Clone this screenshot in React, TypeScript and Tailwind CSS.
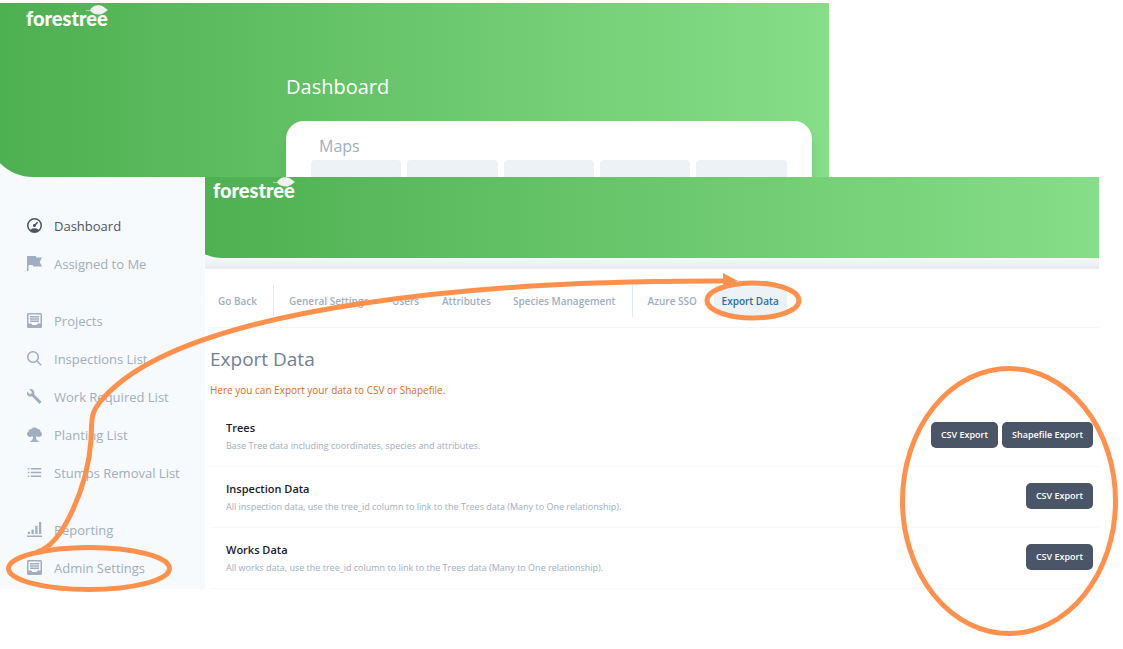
import React from "react";

const ICONS = {
  dashboard:
    "M10 20a10 10 0 1 1 0-20 10 10 0 0 1 0 20zm-5.6-4.29a9.95 9.95 0 0 1 11.2 0 8 8 0 1 0-11.2 0zm6.12-7.64l3.02-3.02 1.41 1.41-3.02 3.02a2 2 0 1 1-1.41-1.41z",
  flag: "M7.667 12H2v8H0V0h12l.333 2H20l-3 6 3 6H8l-.333-2z",
  inbox:
    "M14 14h4V2H2v12h4c0 1.1.9 2 2 2h4a2 2 0 0 0 2-2zM0 2C0 .9.9 0 2 0h16a2 2 0 0 1 2 2v16a2 2 0 0 1-2 2H2a2 2 0 0 1-2-2V2zm4 2h12v2H4V4zm0 3h12v2H4V7zm0 3h12v2H4v-2z",
  search:
    "M12.9 14.32a8 8 0 1 1 1.41-1.41l5.35 5.33-1.42 1.42-5.33-5.34zM8 14A6 6 0 1 0 8 2a6 6 0 0 0 0 12z",
  wrench:
    "M6.47 9.8A5 5 0 0 1 .2 3.22l3.95 3.95 2.82-2.83L3.03.41a5 5 0 0 1 6.4 6.68l10 10-2.83 2.83L6.47 9.8z",
  tree: "M10 .5c2 0 3.600.9 4.300 2.300 2-.1 3.700 1.400 3.600 3.300C19.200 6.800 20 8 20 9.300c0 2.200-1.800 3.900-4.100 3.900-1 0-1.900-.3-2.600-.8-.4.300-.8.500-1.300.6.100 2 .4 3.600 1.200 4.800l2.300.9V20h-11v-1.300l2.300-.9c.8-1.200 1.100-2.800 1.200-4.800-.5-.1-.9-.3-1.300-.6-.7.500-1.600.8-2.600.8C1.800 13.200 0 11.500 0 9.300 0 8 .8 6.800 2.100 6.100 2 4.200 3.700 2.700 5.700 2.800 6.400 1.400 8 .5 10 .5z",
  list: "M1 4h2v2H1V4zm4 0h14v2H5V4zM1 9h2v2H1V9zm4 0h14v2H5V9zm-4 5h2v2H1v-2zm4 0h14v2H5v-2z",
  bars: "M0 18h20v2H0zM1 13h3v3H1zM6 10h3v6H6zM11 5h3v11h-3zM16 0h3v16h-3z",
};

type IconName = keyof typeof ICONS;

const MENU: { label: string; icon: IconName }[][] = [
  [
    { label: "Dashboard", icon: "dashboard" },
    { label: "Assigned to Me", icon: "flag" },
  ],
  [
    { label: "Projects", icon: "inbox" },
    { label: "Inspections List", icon: "search" },
    { label: "Work Required List", icon: "wrench" },
    { label: "Planting List", icon: "tree" },
    { label: "Stumps Removal List", icon: "list" },
  ],
  [
    { label: "Reporting", icon: "bars" },
    { label: "Admin Settings", icon: "inbox" },
  ],
];

const EXPORTS = [
  {
    title: "Trees",
    text: "Base Tree data including coordinates, species and attributes.",
    actions: ["CSV Export", "Shapefile Export"],
  },
  {
    title: "Inspection Data",
    text: "All inspection data, use the tree_id column to link to the Trees data (Many to One relationship).",
    actions: ["CSV Export"],
  },
  {
    title: "Works Data",
    text: "All works data, use the tree_id column to link to the Trees data (Many to One relationship).",
    actions: ["CSV Export"],
  },
];

function Logo() {
  return (
    <a href="#home" className="relative inline-block font-['Lato'] text-[20px] leading-6 font-black text-white">
      forestree
      <svg viewBox="0 0 22 10" className="absolute -top-px right-0 h-[10px] w-[22px]" aria-hidden="true">
        <path d="M0 5h4C6 2 9 0 13 .3c4 .2 6 2.700 9 4.700-3 2-5 4.500-9 4.500C9 9.500 6 8 4 5.500H0z" fill="#f1f1f1" />
      </svg>
    </a>
  );
}

function Sidebar() {
  return (
    <aside className="w-[205px] shrink-0 bg-[#f7fafc] pt-[30px] pl-[27px]">
      <nav className="flex flex-col gap-[19px]" aria-label="Main">
        {MENU.map((group, i) => (
          <ul key={i} className="flex flex-col">
            {group.map((item) => (
              <li key={item.label}>
                <a
                  href="#menu"
                  className={`flex h-[38px] items-center gap-3 text-[13px] ${
                    item.label === "Dashboard" ? "text-[#4a5568]" : "text-[#a0aec0]"
                  }`}
                >
                  <svg viewBox="0 0 20 20" className="mb-0.5 size-[15px] fill-current" aria-hidden="true">
                    <path d={ICONS[item.icon]} />
                  </svg>
                  <span className="pt-0.5">{item.label}</span>
                </a>
              </li>
            ))}
          </ul>
        ))}
      </nav>
    </aside>
  );
}

function SettingsTabs() {
  const tab = "flex h-8 items-center";
  return (
    <nav className="ml-1 flex h-[59px] items-center border-b border-[#f3f6f9] pt-[6px] pl-[9px] text-[10px] font-semibold whitespace-nowrap text-[#a0aec0]" aria-label="Settings">
      <a href="#back" className={`${tab} w-[55px]`}>Go Back</a>
      <div className="flex h-8 items-center border-x border-[#e2e8f0] pr-4 pl-[15px]">
        <a href="#general" className={`${tab} w-[103px]`}>General Settings</a>
        <a href="#users" className={`${tab} w-[50px]`}>Users</a>
        <a href="#attributes" className={`${tab} w-[71px]`}>Attributes</a>
        <a href="#species" className={tab}>Species Management</a>
      </div>
      <a href="#sso" className={`${tab} w-[81px] shrink-0 pl-[15px]`}>Azure SSO</a>
      <a href="#export" className={`${tab} rounded-sm bg-[#edf2f7] px-2 text-[#2b6cb0]`}>Export Data</a>
    </nav>
  );
}

function SettingsPanel() {
  return (
    <main className="mr-6 min-w-0 flex-1">
      <div className="overflow-hidden bg-[#f4f7fa]">
        <header className="-ml-7 h-[81px] rounded-bl-[46px] bg-linear-to-r from-[#4caf50] to-[#86de88] pt-px pl-9">
          <Logo />
        </header>
        <div className="h-[11px] bg-linear-to-b from-[#f4f7fa] to-[#e8ecf0]" />
      </div>
      <section className="bg-white">
        <SettingsTabs />
        <h1 className="mt-[15px] pl-[5px] text-[19px] leading-8 text-[#718096]">Export Data</h1>
        <p className="mt-[7px] pl-[5px] text-[10px] leading-4 text-[#dd6b20]">Here you can Export your data to CSV or Shapefile.</p>
        <ul className="mt-2 ml-[5px]">
          {EXPORTS.map((row) => (
            <li key={row.title} className="flex h-[61px] items-center justify-between border-b border-[#f7fafc] pr-[6px] pl-4">
              <div>
                <h2 className="text-[11px] leading-5 font-semibold text-[#1a202c]">{row.title}</h2>
                <p className="text-[9px] leading-4 text-[#a0aec0]">{row.text}</p>
              </div>
              <div className="flex gap-1 pb-0.5">
                {row.actions.map((action) => (
                  <button key={action} type="button" className="h-[26px] rounded-[5px] bg-[#4a5568] px-[10px] text-[9px] font-semibold text-white">
                    {action}
                  </button>
                ))}
              </div>
            </li>
          ))}
        </ul>
      </section>
    </main>
  );
}

function DashboardHeader() {
  return (
    <div className="w-[73.8%] overflow-hidden bg-[#f7fafc]">
      <header className="-ml-[13px] flex h-[174px] flex-col overflow-hidden rounded-bl-[46px] bg-linear-to-r from-[#4caf50] to-[#86de88] pt-[3px] pl-[13px]">
        <div className="pl-[26px]">
          <Logo />
        </div>
        <div className="mt-[39px] mr-[17px] ml-[286px] flex flex-1 flex-col">
          <h1 className="text-[20px] leading-8 text-white">Dashboard</h1>
          <div className="mt-[18px] flex-1 rounded-t-[18px] bg-white px-[25px] pt-[11px] shadow-lg">
            <h2 className="pl-2 text-[16px] leading-7 text-[#a0aec0]">Maps</h2>
            <div className="grid grid-cols-5 gap-[6px]">
              {[0, 1, 2, 3, 4].map((n) => (
                <div key={n} className="h-5 rounded-t-sm bg-[#edf2f7]" />
              ))}
            </div>
          </div>
        </div>
      </header>
    </div>
  );
}

function Annotations() {
  return (
    <svg
      viewBox="0 0 1123 649"
      className="pointer-events-none absolute top-0 left-0 h-[649px] w-[1123px]"
      fill="none"
      stroke="#ff914d"
      strokeWidth="5"
      aria-hidden="true"
    >
      <ellipse cx="89" cy="568.500" rx="80.500" ry="21" />
      <ellipse cx="753" cy="300.500" rx="46" ry="17.500" />
      <ellipse cx="1009" cy="501" rx="106.500" ry="132.500" />
      <path d="M37 552C63 545 88 485 91 440C92 421 90 414 100 402C180 303 500 280 725 281" />
      <path d="M723 273l15 8-15 4z" fill="#ff914d" stroke="none" />
    </svg>
  );
}

export default function App() {
  return (
    <div className="relative min-h-screen overflow-hidden bg-white pt-[3px] font-['Open_Sans',sans-serif]">
      <DashboardHeader />
      <div className="flex">
        <Sidebar />
        <SettingsPanel />
      </div>
      <Annotations />
    </div>
  );
}
